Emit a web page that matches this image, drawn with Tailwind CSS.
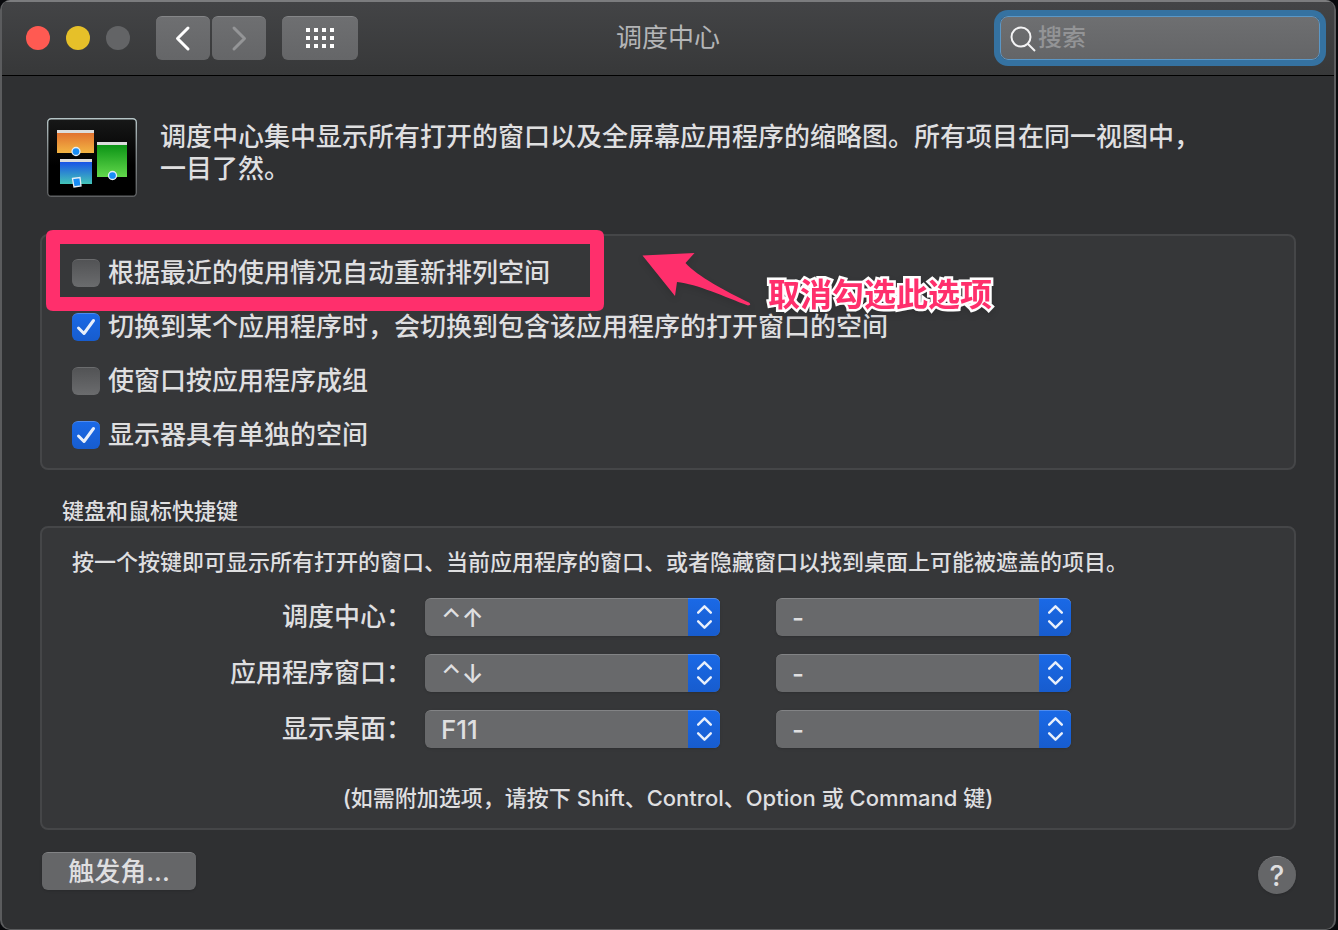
<!DOCTYPE html>
<html lang="zh-CN">
<head>
    <meta charset="UTF-8">
    <meta name="viewport" content="width=device-width, initial-scale=1.0">
    <title>调度中心</title>
    <script src="https://cdn.jsdelivr.net/npm/@tailwindcss/browser@4"></script>
    <style> body { font-family: 'Inter', 'Noto Sans CJK SC', sans-serif; } </style>
</head>
<body class="bg-[#08090c] text-[#dfdfe0] font-medium pr-[2px]">

    <svg class="hidden" aria-hidden="true">
        <symbol id="updown" viewBox="0 0 32 38">
            <path d="M10 14L16.500 7.500L23 14M10 23L16.500 29.500L23 23" fill="none" stroke="#e8effb" stroke-width="2.500" stroke-linecap="round" stroke-linejoin="round"/>
        </symbol>
    </svg>

    <div class="min-h-screen flex flex-col rounded-[10px] overflow-hidden border-l-2 border-r-2 border-b border-[#5b5c5e] bg-[#2f3032]">

        <!-- Title bar -->
        <header class="h-[76px] grid grid-cols-[1fr_auto_1fr] items-center px-[14px] pb-[2px] border-t-2 border-t-[#7b7c7e] border-b border-b-black bg-linear-to-b from-[#434446] to-[#373839]">
            <div class="flex items-center ml-[10px]">
                <div class="flex gap-4">
                    <button type="button" aria-label="关闭" class="size-6 rounded-full bg-[#ff5a52]"></button>
                    <button type="button" aria-label="最小化" class="size-6 rounded-full bg-[#e6c029]"></button>
                    <button type="button" aria-label="缩放" class="size-6 rounded-full bg-[#636466]"></button>
                </div>
                <div class="flex gap-[2px] ml-[26px]">
                    <button type="button" aria-label="后退" class="w-[54px] h-11 rounded-md border-t border-[#858688] bg-linear-to-b from-[#6e6f71] to-[#656668]">
                        <svg class="w-[54px] h-[43px]" viewBox="0 0 54 43" fill="none" stroke="#fff" stroke-width="3" stroke-linecap="round" stroke-linejoin="round"><path d="M32 11L21.500 21.500L32 32"/></svg>
                    </button>
                    <button type="button" aria-label="前进" class="w-[54px] h-11 rounded-md border-t border-[#858688] bg-linear-to-b from-[#6e6f71] to-[#656668]">
                        <svg class="w-[54px] h-[43px]" viewBox="0 0 54 43" fill="none" stroke="#949597" stroke-width="3" stroke-linecap="round" stroke-linejoin="round"><path d="M22 11L32.500 21.500L22 32"/></svg>
                    </button>
                </div>
                <button type="button" aria-label="显示全部" class="w-[76px] h-11 ml-4 rounded-md border-t border-[#858688] bg-linear-to-b from-[#6e6f71] to-[#656668]">
                    <svg class="w-[76px] h-[43px]" viewBox="0 0 76 43" fill="none" stroke="#fff" stroke-width="4"><path stroke-dasharray="4 4" d="M24 13H52M24 21H52M24 29H52"/></svg>
                </button>
            </div>
            <h1 class="text-[26px] leading-8 font-normal text-[#b4b5b7]">调度中心</h1>
            <div class="relative w-[320px] justify-self-end">
                <svg class="absolute left-2 top-2 size-7" viewBox="0 0 28 28" fill="none" stroke="#f3f3f4" stroke-width="2"><circle cx="13" cy="13" r="9.500"/><path d="M20 20L27 27"/></svg>
                <input type="search" aria-label="搜索" placeholder="搜索" class="w-full h-11 pl-[37px] pr-3 rounded-lg border border-[#5b97c6] bg-linear-to-b from-[#6e6f71] to-[#646567] text-2xl text-white outline-none ring-6 ring-[#3572a1] placeholder:text-[#939496]">
            </div>
        </header>

        <main class="flex-1 px-[38px] pt-[42px]">

            <section class="flex items-start gap-[23px] pl-[7px]">
                <svg class="w-[90px] h-[79px] shrink-0" viewBox="0 0 90 79">
                    <defs>
                        <linearGradient id="orange" x2="0" y2="1"><stop stop-color="#df6b2e"/><stop offset="1" stop-color="#f3b543"/></linearGradient>
                        <linearGradient id="green" x2="0" y2="1"><stop stop-color="#068f12"/><stop offset="1" stop-color="#63d84c"/></linearGradient>
                        <linearGradient id="blue" x2="0" y2="1"><stop stop-color="#174ee8"/><stop offset="1" stop-color="#43c4b8"/></linearGradient>
                        <linearGradient id="tile" x2="0" y2="1"><stop stop-color="#171818"/><stop offset=".6" stop-color="#000"/></linearGradient>
                        <linearGradient id="edge" x2="0" y2="1"><stop stop-color="#b5c4c6"/><stop offset=".4" stop-color="#858c8e"/><stop offset="1" stop-color="#5e6062"/></linearGradient>
                    </defs>
                    <rect x=".7" y=".7" width="88.600" height="77.600" rx="3.500" fill="url(#tile)" stroke="url(#edge)" stroke-width="1.400"/>
                    <path d="M10 13H47V35H10Z" fill="url(#orange)"/><path d="M10 12H47V15H10Z" fill="#dcdcdc"/>
                    <path d="M50 25H80V59H50Z" fill="url(#green)"/><path d="M50 24H80V27H50Z" fill="#dcdcdc"/>
                    <path d="M13 43H45V66H13Z" fill="url(#blue)"/><path d="M13 41H45V44H13Z" fill="#dcdcdc"/>
                    <g fill="#178cf5" stroke="#e5eef5" stroke-width="1.300">
                        <circle cx="29" cy="33.500" r="4"/>
                        <circle cx="65.500" cy="57.500" r="4"/>
                        <path d="M25.500 60.500L33 59.500L34 68L27 69Z"/>
                    </g>
                </svg>
                <p class="text-[26px] leading-8 pt-[3px]">调度中心集中显示所有打开的窗口以及全屏幕应用程序的缩略图。所有项目在同一视图中，<br>一目了然。</p>
            </section>

            <!-- Spaces options -->
            <section class="relative mt-[37px] h-[236px] pl-[30px] pt-[10px] rounded-lg border-2 border-[#454648] bg-[#363739] text-[26px] leading-8">
                <div class="flex items-center gap-2 h-[54px]">
                    <input type="checkbox" id="rearrange" class="appearance-none size-7 rounded-md border-t border-[#6b6c6e] bg-linear-to-b from-[#525355] to-[#6b6c6e]">
                    <label for="rearrange">根据最近的使用情况自动重新排列空间</label>
                </div>
                <div class="flex items-center gap-2 h-[54px]">
                    <span class="relative size-7">
                        <input type="checkbox" id="switch-space" checked class="block appearance-none size-7 rounded-md border-t border-[#4f8bee] bg-linear-to-b from-[#1a69e6] to-[#175cce]">
                        <svg class="absolute inset-0 size-7 pointer-events-none" viewBox="0 0 28 28" fill="none" stroke="#e8effb" stroke-width="3" stroke-linecap="round" stroke-linejoin="round"><path d="M6.500 15L12 20.500L21.500 7.500"/></svg>
                    </span>
                    <label for="switch-space">切换到某个应用程序时，会切换到包含该应用程序的打开窗口的空间</label>
                </div>
                <div class="flex items-center gap-2 h-[54px]">
                    <input type="checkbox" id="group-windows" class="appearance-none size-7 rounded-md border-t border-[#6b6c6e] bg-linear-to-b from-[#525355] to-[#6b6c6e]">
                    <label for="group-windows">使窗口按应用程序成组</label>
                </div>
                <div class="flex items-center gap-2 h-[54px]">
                    <span class="relative size-7">
                        <input type="checkbox" id="separate-spaces" checked class="block appearance-none size-7 rounded-md border-t border-[#4f8bee] bg-linear-to-b from-[#1a69e6] to-[#175cce]">
                        <svg class="absolute inset-0 size-7 pointer-events-none" viewBox="0 0 28 28" fill="none" stroke="#e8effb" stroke-width="3" stroke-linecap="round" stroke-linejoin="round"><path d="M6.500 15L12 20.500L21.500 7.500"/></svg>
                    </span>
                    <label for="separate-spaces">显示器具有单独的空间</label>
                </div>

                <!-- Callout -->
                <div class="absolute left-1 -top-[6px] w-[558px] h-[81px] pointer-events-none">
                    <svg class="size-full" viewBox="0 0 558 81"><path fill="#ff2f6c" fill-rule="evenodd" d="M7 0H551Q558 0 558 7V74Q558 81 551 81H7Q0 81 0 74V7Q0 0 7 0ZM14 14V67H544V14Z"/></svg>
                </div>
                <svg class="absolute left-[596px] top-[14px] w-[116px] h-[60px] drop-shadow-md pointer-events-none" viewBox="638 250 116 60"><path fill="#ff2f6c" d="M642.500 255.500L694.500 253L685.500 263C697 276 727 292 749 302.500Q752 305 748 305.500C725 297 697 284 677 282L675 296Z"/></svg>
                <span class="absolute left-[726px] top-[39px] text-[32px] leading-10 font-bold whitespace-nowrap text-[#ff2f6c] [-webkit-text-stroke:5px_white] [paint-order:stroke_fill] [stroke-linejoin:round] drop-shadow-md">取消勾选此选项</span>
            </section>

            <!-- Keyboard and mouse shortcuts -->
            <h2 class="mt-[26px] pl-[22px] text-[22px] leading-[30px]">键盘和鼠标快捷键</h2>
            <section class="h-[304px] rounded-lg border-2 border-[#454648] bg-[#363739]">
                <p class="pt-[19px] pl-[30px] text-[22px] leading-[30px]">按一个按键即可显示所有打开的窗口、当前应用程序的窗口、或者隐藏窗口以找到桌面上可能被遮盖的项目。</p>
                <div class="mt-[21px] grid grid-cols-[383fr_295fr_351fr_223fr] gap-y-[18px] text-[26px] leading-[38px]">
                    <label for="mission-key" class="text-right pr-[13px]">调度中心：</label>
                    <div class="relative h-[38px]">
                        <select id="mission-key" class="appearance-none w-full h-[38px] pl-4 pr-8 rounded-md border-t border-[#828385] bg-[#68696b] shadow-sm"><option>⌃↑</option></select>
                        <svg class="absolute right-0 top-0 w-8 h-[38px] rounded-r-md border-t border-[#4f8bee] bg-linear-to-b from-[#1a69e6] to-[#175cce] pointer-events-none"><use href="#updown"/></svg>
                    </div>
                    <div class="relative h-[38px] ml-14">
                        <select aria-label="调度中心鼠标快捷键" class="appearance-none w-full h-[38px] pl-4 pr-8 rounded-md border-t border-[#828385] bg-[#68696b] shadow-sm"><option>-</option></select>
                        <svg class="absolute right-0 top-0 w-8 h-[38px] rounded-r-md border-t border-[#4f8bee] bg-linear-to-b from-[#1a69e6] to-[#175cce] pointer-events-none"><use href="#updown"/></svg>
                    </div>
                    <label for="windows-key" class="col-start-1 text-right pr-[13px]">应用程序窗口：</label>
                    <div class="relative h-[38px]">
                        <select id="windows-key" class="appearance-none w-full h-[38px] pl-4 pr-8 rounded-md border-t border-[#828385] bg-[#68696b] shadow-sm"><option>⌃↓</option></select>
                        <svg class="absolute right-0 top-0 w-8 h-[38px] rounded-r-md border-t border-[#4f8bee] bg-linear-to-b from-[#1a69e6] to-[#175cce] pointer-events-none"><use href="#updown"/></svg>
                    </div>
                    <div class="relative h-[38px] ml-14">
                        <select aria-label="应用程序窗口鼠标快捷键" class="appearance-none w-full h-[38px] pl-4 pr-8 rounded-md border-t border-[#828385] bg-[#68696b] shadow-sm"><option>-</option></select>
                        <svg class="absolute right-0 top-0 w-8 h-[38px] rounded-r-md border-t border-[#4f8bee] bg-linear-to-b from-[#1a69e6] to-[#175cce] pointer-events-none"><use href="#updown"/></svg>
                    </div>
                    <label for="desktop-key" class="col-start-1 text-right pr-[13px]">显示桌面：</label>
                    <div class="relative h-[38px]">
                        <select id="desktop-key" class="appearance-none w-full h-[38px] pl-4 pr-8 rounded-md border-t border-[#828385] bg-[#68696b] shadow-sm"><option>F11</option></select>
                        <svg class="absolute right-0 top-0 w-8 h-[38px] rounded-r-md border-t border-[#4f8bee] bg-linear-to-b from-[#1a69e6] to-[#175cce] pointer-events-none"><use href="#updown"/></svg>
                    </div>
                    <div class="relative h-[38px] ml-14">
                        <select aria-label="显示桌面鼠标快捷键" class="appearance-none w-full h-[38px] pl-4 pr-8 rounded-md border-t border-[#828385] bg-[#68696b] shadow-sm"><option>-</option></select>
                        <svg class="absolute right-0 top-0 w-8 h-[38px] rounded-r-md border-t border-[#4f8bee] bg-linear-to-b from-[#1a69e6] to-[#175cce] pointer-events-none"><use href="#updown"/></svg>
                    </div>
                </div>
                <p class="mt-[35px] text-center text-[22px] leading-[30px]">(如需附加选项，请按下 Shift、Control、Option 或 Command 键)</p>
            </section>

            <footer class="mt-[22px] flex items-start justify-between pl-[2px]">
                <button type="button" class="w-[154px] h-[38px] rounded-md border-t border-[#828385] bg-[#656668] shadow-sm text-[26px] leading-8">触发角...</button>
                <button type="button" aria-label="帮助" class="mt-1 size-[38px] rounded-full border-t border-[#7b7c7e] bg-[#656668] shadow-sm text-[28px] leading-8">?</button>
            </footer>
        </main>
    </div>
</body>
</html>
